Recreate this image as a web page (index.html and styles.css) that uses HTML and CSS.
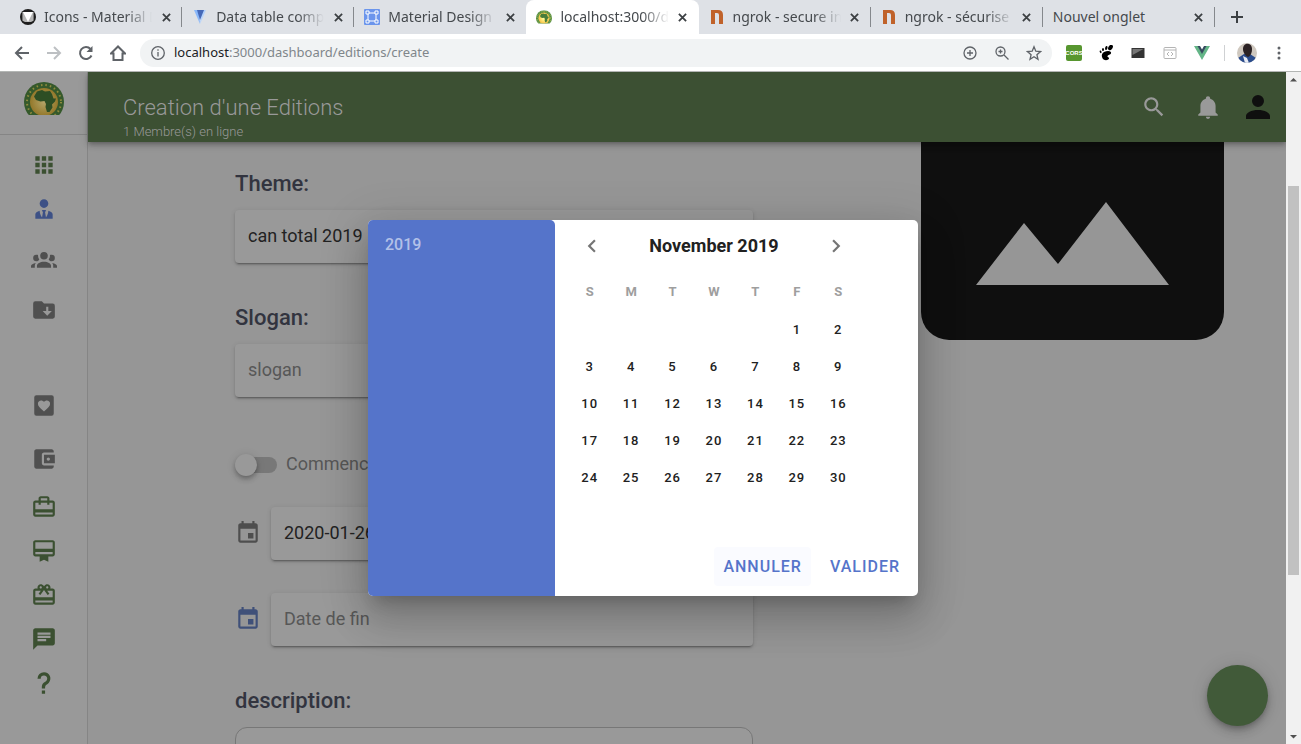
FILE: index.html
```html
<!DOCTYPE html>
<html lang="fr">
<head>
<meta charset="utf-8">
<title>Creation d'une Editions</title>
<link rel="stylesheet" href="styles.css">
</head>
<body>
<div class="tabstrip">
  <div class="tabs">
    <div class="tab">
      <svg class="favicon" viewBox="0 0 16 16"><circle cx="8" cy="8" r="8" fill="#1d1d1d"/><path d="M2 3h2v8L2 12zM14 3h-2v8l2 1z" fill="#777"/><path d="M3 3h10v9l-2 1H5l-2-1z" fill="#b5b5b5"/><path d="M3 3h10L8 13z" fill="#fff"/></svg>
      <span class="tab-title">Icons - Material D</span>
      <button class="close" aria-label="Fermer"><svg viewBox="0 0 10 10"><path d="M1 1l8 8M9 1L1 9"/></svg></button>
    </div>
    <div class="tab">
      <svg class="favicon" viewBox="0 0 16 16"><path d="M2 1h5l1 14z" fill="#8ab8fa"/><path d="M9 1h5L8 15z" fill="#b5d3fb"/><path d="M5 1h7L8 11z" fill="#4669b8"/></svg>
      <span class="tab-title">Data table comp</span>
      <button class="close" aria-label="Fermer"><svg viewBox="0 0 10 10"><path d="M1 1l8 8M9 1L1 9"/></svg></button>
    </div>
    <div class="tab before-active">
      <svg class="favicon" viewBox="0 0 16 16"><rect width="16" height="16" rx="1" fill="#6b95ec"/><path d="M4 4h8v8H4z" fill="none" stroke="#fff"/><path d="M2 2h3v3H2zM11 2h3v3h-3zM2 11h3v3H2zM11 11h3v3h-3z" fill="#6b95ec" stroke="#fff"/></svg>
      <span class="tab-title">Material Design</span>
      <button class="close" aria-label="Fermer"><svg viewBox="0 0 10 10"><path d="M1 1l8 8M9 1L1 9"/></svg></button>
    </div>
    <div class="tab active">
      <svg class="favicon bright" viewBox="0 0 40 34"><use href="#caf"/></svg>
      <span class="tab-title">localhost:3000/d</span>
      <button class="close" aria-label="Fermer"><svg viewBox="0 0 10 10"><path d="M1 1l8 8M9 1L1 9"/></svg></button>
    </div>
    <div class="tab">
      <svg class="favicon" viewBox="0 0 16 16"><path d="M2 1h7q5 0 5 5v9h-4V6q0-2-2-2H6v11H2z" fill="#c0622a"/></svg>
      <span class="tab-title">ngrok - secure in</span>
      <button class="close" aria-label="Fermer"><svg viewBox="0 0 10 10"><path d="M1 1l8 8M9 1L1 9"/></svg></button>
    </div>
    <div class="tab">
      <svg class="favicon" viewBox="0 0 16 16"><path d="M2 1h7q5 0 5 5v9h-4V6q0-2-2-2H6v11H2z" fill="#c0622a"/></svg>
      <span class="tab-title">ngrok - sécurise</span>
      <button class="close" aria-label="Fermer"><svg viewBox="0 0 10 10"><path d="M1 1l8 8M9 1L1 9"/></svg></button>
    </div>
    <div class="tab">
      <span class="tab-title">Nouvel onglet</span>
      <button class="close" aria-label="Fermer"><svg viewBox="0 0 10 10"><path d="M1 1l8 8M9 1L1 9"/></svg></button>
    </div>
  </div>
  <button class="new-tab" aria-label="Nouvel onglet"><svg viewBox="0 0 12 12"><path d="M6 0v12M0 6h12"/></svg></button>
</div>

<div class="toolbar">
  <div class="nav-buttons">
    <button aria-label="Retour"><svg viewBox="0 0 16 16"><path d="M15 8H2M8 2L2 8l6 6"/></svg></button>
    <button class="disabled" aria-label="Avancer"><svg viewBox="0 0 16 16"><path d="M1 8h13M8 2l6 6-6 6"/></svg></button>
    <button aria-label="Actualiser"><svg viewBox="0 0 16 16"><path d="M13.500 10.500A6 6 0 1 1 12.500 4"/><path d="M14.500 1v6h-6z" fill="#5f6368" stroke="none"/></svg></button>
    <button aria-label="Accueil"><svg viewBox="0 0 16 16"><path d="M1 8.500L8 1.500l7 7h-2.500V15h-9V8.500z"/></svg></button>
  </div>
  <div class="omnibox">
    <svg class="info" viewBox="0 0 16 16"><circle cx="8" cy="8" r="6.300"/><path d="M8 7v4.500M8 4.300v1.500"/></svg>
    <div class="url"><span class="host">localhost</span>:3000/dashboard/editions/create</div>
    <button aria-label="Ajouter"><svg viewBox="0 0 16 16"><circle cx="8" cy="8" r="6"/><path d="M8 5v6M5 8h6"/></svg></button>
    <button aria-label="Zoom"><svg viewBox="0 0 16 16"><circle cx="6.500" cy="6.500" r="4.500"/><path d="M10 10l4.500 4.500M6.500 4.500v4M4.500 6.500h4"/></svg></button>
    <button aria-label="Favori"><svg viewBox="0 0 16 16"><path d="M8 1.800l1.800 4.400 4.700.400-3.600 3.100 1.100 4.600L8 11.800l-4 2.500 1.100-4.600L1.500 6.600l4.700-.400z"/></svg></button>
  </div>
  <div class="extensions">
    <button class="cors">CORS</button>
    <button aria-label="GNOME"><svg viewBox="0 0 16 16"><path d="M6 7c4-2 8-1 7 1.500-.500 1.500-3 1-3.500 2.500s2 1 1.500 2.500C10 16 5 16 4 12c-.500-2 0-4 2-5z"/><ellipse cx="12.500" cy="2.500" rx="2" ry="3" transform="rotate(35 12.500 2.500)"/><ellipse cx="8.300" cy="3" rx="1.200" ry="2" transform="rotate(15 8.300 3)"/><ellipse cx="5" cy="4.500" rx="1" ry="1.600"/><ellipse cx="2.600" cy="6.800" rx=".9" ry="1.400" transform="rotate(-20 2.600 6.800)"/></svg></button>
    <button aria-label="Terminal"><svg viewBox="0 0 16 16"><path d="M1.500 3h13v10h-13z" fill="#333"/><path d="M2.500 4h11L2.500 10z" fill="#777"/></svg></button>
    <button aria-label="Code"><svg viewBox="0 0 16 16" fill="none" stroke="#b4b4b4"><rect x="2" y="2.500" width="12" height="11" rx="1"/><path d="M2 5h12M7 7L5 9l2 2M9 7l2 2-2 2"/></svg></button>
    <button aria-label="Vue"><svg viewBox="0 0 16 16"><path d="M0 1h4l4 7 4-7h4L8 15z" fill="#64b587"/><path d="M3.500 1H6l2 3.500L10 1h2.500L8 9z" fill="#35495e"/></svg></button>
  </div>
  <span class="divider"></span>
  <button class="avatar" aria-label="Profil"><svg viewBox="0 0 20 20"><defs><clipPath id="round"><circle cx="10" cy="10" r="10"/></clipPath></defs><g clip-path="url(#round)"><path d="M0 0h20v20H0z" fill="#cfc8bf"/><path d="M1 20v-5l6-4h6l6 4v5z" fill="#2b4c8c"/><path d="M6 13l4 2 2 5H8z" fill="#e8ecf4"/><path d="M6 6c0-7 9-7 9 0 0 3-1 7-4 8-3-1-5-5-5-8z" fill="#2b2224"/></g></svg></button>
  <button class="menu" aria-label="Menu"><svg viewBox="0 0 4 16"><circle cx="2" cy="3" r="1.500"/><circle cx="2" cy="8" r="1.500"/><circle cx="2" cy="13" r="1.500"/></svg></button>
</div>

<div class="viewport">
  <div class="app">
    <aside class="sidebar">
      <a class="logo" href="#" aria-label="Accueil">
        <svg viewBox="0 0 40 34">
          <defs><radialGradient id="gold"><stop offset="0" stop-color="#b3a468"/><stop offset="1" stop-color="#94782a"/></radialGradient>
          <clipPath id="cut"><path d="M0 0h40v33H0z"/></clipPath>
          <g id="caf"><g clip-path="url(#cut)"><circle cx="20" cy="20" r="20" fill="#35592b"/><circle cx="20" cy="20" r="17" fill="none" stroke="#8f8b3c" stroke-width="2" stroke-dasharray="1.500 3"/><circle cx="20" cy="20" r="14" fill="url(#gold)"/><path d="M13 9.500l5-1.500 3 1.500 5-.5 2 3 1.500 4.500h2.500l-1 3-3 3 .5 3-3 4.500h-2.500l-1.500-5 .5-3-1.500-3-4 .5-4.500-1.500-2-3.500z" fill="#2d4e24"/></g></g></defs>
          <use href="#caf"/>
        </svg>
      </a>
      <nav class="side-nav">
        <div class="group compact green">
          <a href="#" aria-label="Tableau de bord"><svg class="icon" viewBox="0 0 24 24"><path d="M16,20H20V16H16M16,14H20V10H16M10,8H14V4H10M16,8H20V4H16M10,14H14V10H10M4,14H8V10H4M4,20H8V16H4M10,20H14V16H10M4,8H8V4H4V8Z"/></svg></a>
          <a class="current" href="#" aria-label="Membres"><svg class="icon" viewBox="0 0 24 24"><path d="M12 3C14.210 3 16 4.790 16 7S14.210 11 12 11 8 9.210 8 7 9.790 3 12 3M16 13.540C16 14.600 15.720 17.070 13.810 19.830L13 15L13.940 13.120C13.320 13.050 12.670 13 12 13S10.680 13.050 10.060 13.120L11 15L10.190 19.830C8.280 17.070 8 14.600 8 13.540C5.610 14.240 4 15.500 4 17V21H20V17C20 15.500 18.400 14.240 16 13.540Z"/></svg></a>
        </div>
        <div class="group roomy">
          <a href="#" aria-label="Equipes"><svg class="icon" viewBox="0 0 24 24"><path d="M12,5.500A3.500,3.500 0 0,1 15.500,9A3.500,3.500 0 0,1 12,12.500A3.500,3.500 0 0,1 8.500,9A3.500,3.500 0 0,1 12,5.500M5,8C5.560,8 6.080,8.150 6.530,8.420C6.380,9.850 6.800,11.270 7.660,12.380C7.160,13.340 6.160,14 5,14A3,3 0 0,1 2,11A3,3 0 0,1 5,8M19,8A3,3 0 0,1 22,11A3,3 0 0,1 19,14C17.840,14 16.840,13.340 16.340,12.380C17.200,11.270 17.620,9.850 17.470,8.420C17.920,8.150 18.440,8 19,8M5.500,18.250C5.500,16.180 8.410,14.500 12,14.500C15.590,14.500 18.500,16.180 18.500,18.250V20H5.500V18.250M0,20V18.500C0,17.110 1.890,15.940 4.450,15.600C3.860,16.280 3.500,17.220 3.500,18.250V20H0M24,20H20.500V18.250C20.500,17.220 20.140,16.280 19.550,15.600C22.110,15.940 24,17.110 24,18.500V20Z"/></svg></a>
          <a href="#" aria-label="Dossiers"><svg class="icon" viewBox="0 0 24 24"><path d="M20,6A2,2 0 0,1 22,8V18A2,2 0 0,1 20,20H4A2,2 0 0,1 2,18V6A2,2 0 0,1 4,4H10L12,6H20M19.250,13H16V9H14V13H10.750L15,17.250"/></svg></a>
        </div>
        <div class="group roomy spaced">
          <a href="#" aria-label="Favoris"><svg class="icon" viewBox="0 0 24 24"><path fill-rule="evenodd" d="M5,2H19A2,2 0 0,1 21,4V19A2,2 0 0,1 19,21H5A2,2 0 0,1 3,19V4A2,2 0 0,1 5,2M12,17L12.720,16.340C15.800,13.600 17.600,12 17.600,9.900C17.600,8.200 16.300,7 14.700,7C13.600,7 12.600,7.500 12,8.300C11.400,7.500 10.400,7 9.300,7C7.700,7 6.400,8.200 6.400,9.900C6.400,12 8.200,13.600 11.280,16.340Z"/></svg></a>
          <a href="#" aria-label="Portefeuille"><svg class="icon" viewBox="0 0 24 24"><path d="M21 18v1c0 1.100-.9 2-2 2H5c-1.110 0-2-.9-2-2V5c0-1.100.89-2 2-2h14c1.100 0 2 .9 2 2v1h-9c-1.110 0-2 .9-2 2v8c0 1.100.89 2 2 2h9zm-9-2h10V8H12v8zm4-2.500c-.83 0-1.500-.67-1.500-1.500s.67-1.500 1.500-1.500 1.500.67 1.500 1.500-.67 1.500-1.500 1.500z"/></svg></a>
        </div>
        <div class="group compact green last">
          <a href="#" aria-label="Voyages"><svg class="icon" viewBox="0 0 24 24"><path d="M20 6h-3V4c0-1.110-.89-2-2-2H9c-1.110 0-2 .89-2 2v2H4c-1.110 0-2 .89-2 2v11c0 1.110.89 2 2 2h16c1.110 0 2-.89 2-2V8c0-1.110-.89-2-2-2zM9 4h6v2H9V4zm11 15H4v-2h16v2zm0-5H4V8h3v2h2V8h6v2h2V8h3v6z"/></svg></a>
          <a href="#" aria-label="Adhésions"><svg class="icon" viewBox="0 0 24 24"><path d="M20 2H4c-1.110 0-2 .89-2 2v11c0 1.110.89 2 2 2h4v5l4-2 4 2v-5h4c1.110 0 2-.89 2-2V4c0-1.110-.89-2-2-2zm0 13H4v-2h16v2zm0-5H4V4h16v6z"/></svg></a>
          <a href="#" aria-label="Cadeaux"><svg class="icon" viewBox="0 0 24 24"><path d="M20 6h-2.180c.11-.31.18-.65.18-1 0-1.660-1.340-3-3-3-1.050 0-1.960.54-2.500 1.350l-.5.67-.5-.68C10.960 2.540 10.050 2 9 2 7.340 2 6 3.340 6 5c0 .35.07.69.18 1H4c-1.110 0-1.990.89-1.990 2L2 19c0 1.110.89 2 2 2h16c1.110 0 2-.89 2-2V8c0-1.110-.89-2-2-2zm-5-2c.55 0 1 .45 1 1s-.45 1-1 1-1-.45-1-1 .45-1 1-1zM9 4c.55 0 1 .45 1 1s-.45 1-1 1-1-.45-1-1 .45-1 1-1zm11 15H4v-2h16v2zm0-5H4V8h5.080L7 10.830 8.620 12 11 8.760l1-1.360 1 1.360L15.380 12 17 10.830 14.920 8H20v6z"/></svg></a>
          <a href="#" aria-label="Messages"><svg class="icon" viewBox="0 0 24 24"><path d="M20 2H4c-1.100 0-1.990.9-1.990 2L2 22l4-4h14c1.100 0 2-.9 2-2V4c0-1.100-.9-2-2-2zM6 9h12v2H6V9zm8 5H6v-2h8v2zm4-6H6V6h12v2z"/></svg></a>
          <a href="#" aria-label="Aide"><svg class="icon" viewBox="0 0 24 24"><path d="M10,19H13V22H10V19M12,2C17.350,2.220 19.680,7.620 16.500,11.670C15.670,12.670 14.330,13.330 13.670,14.170C13,15 13,16 13,17H10C10,15.330 10,13.920 10.670,12.920C11.330,11.920 12.670,11.330 13.500,10.670C15.920,8.430 15.320,5.260 12,5A3,3 0 0,0 9,8H6A6,6 0 0,1 12,2Z"/></svg></a>
        </div>
      </nav>
    </aside>

    <div class="page">
      <header class="appbar">
        <div class="heading">
          <h1>Creation d'une Editions</h1>
          <p>1 Membre(s) en ligne</p>
        </div>
        <div class="actions">
          <button aria-label="Rechercher"><svg class="icon" viewBox="0 0 24 24"><path d="M15.500 14h-.79l-.28-.27C15.410 12.590 16 11.110 16 9.500 16 5.910 13.090 3 9.500 3S3 5.910 3 9.500 5.910 16 9.500 16c1.610 0 3.090-.59 4.230-1.570l.27.28v.79l5 4.990L20.490 19l-4.990-5zm-6 0C7.010 14 5 11.990 5 9.500S7.010 5 9.500 5 14 7.010 14 9.500 11.990 14 9.500 14z"/></svg></button>
          <button aria-label="Notifications"><svg class="icon" viewBox="0 0 24 24"><path d="M21,19V20H3V19L5,17V11C5,7.900 7.030,5.170 10,4.290C10,4.190 10,4.100 10,4A2,2 0 0,1 12,2A2,2 0 0,1 14,4C14,4.100 14,4.190 14,4.290C16.970,5.170 19,7.900 19,11V17L21,19M14,21A2,2 0 0,1 12,23A2,2 0 0,1 10,21"/></svg></button>
          <button class="account" aria-label="Compte"><svg viewBox="0 0 24 24"><path d="M12,4A4,4 0 0,1 16,8A4,4 0 0,1 12,12A4,4 0 0,1 8,8A4,4 0 0,1 12,4M12,14C16.420,14 20,15.790 20,18V20H4V18C4,15.790 7.580,14 12,14Z"/></svg></button>
        </div>
      </header>

      <main class="content">
        <form class="form">
          <div class="field">
            <label for="theme">Theme:</label>
            <input class="box" id="theme" type="text" value="can total 2019">
          </div>
          <div class="field">
            <label for="slogan">Slogan:</label>
            <input class="box" id="slogan" type="text" placeholder="slogan">
          </div>
          <div class="switch-row">
            <input class="switch" id="started" type="checkbox">
            <label for="started">Commencer</label>
          </div>
          <div class="date-row">
            <svg class="icon" viewBox="0 0 24 24"><path d="M17 12h-5v5h5v-5zM16 1v2H8V1H6v2H5c-1.110 0-1.990.9-1.990 2L3 19c0 1.100.89 2 2 2h14c1.100 0 2-.9 2-2V5c0-1.100-.9-2-2-2h-1V1h-2zm3 18H5V8h14v11z"/></svg>
            <input class="box" type="text" value="2020-01-26" aria-label="Date de debut">
          </div>
          <div class="date-row focused">
            <svg class="icon" viewBox="0 0 24 24"><path d="M17 12h-5v5h5v-5zM16 1v2H8V1H6v2H5c-1.110 0-1.990.9-1.990 2L3 19c0 1.100.89 2 2 2h14c1.100 0 2-.9 2-2V5c0-1.100-.9-2-2-2h-1V1h-2zm3 18H5V8h14v11z"/></svg>
            <input class="box" type="text" placeholder="Date de fin" aria-label="Date de fin">
          </div>
          <div class="field">
            <label for="description">description:</label>
            <textarea class="area" id="description"></textarea>
          </div>
        </form>
        <div class="picture">
          <svg viewBox="0 0 303 198" role="img" aria-label="Image"><path d="M0 0h303v170a28 28 0 0 1-28 28H28a28 28 0 0 1-28-28z" fill="#0f0f0f"/><path d="M55 143L103 81l34 41 48-62 63 83z" fill="#969696"/></svg>
        </div>
      </main>
    </div>
    <button class="fab" aria-label="Ajouter"></button>

    <div class="overlay">
      <div class="picker" role="dialog" aria-label="Choisir une date">
        <div class="picker-title"><button>2019</button></div>
        <div class="picker-body">
          <div class="month-bar">
            <button aria-label="Mois précédent"><svg class="icon" viewBox="0 0 24 24"><path d="M15.410,16.580L10.830,12L15.410,7.410L14,6L8,12L14,18L15.410,16.580Z"/></svg></button>
            <button class="month">November 2019</button>
            <button aria-label="Mois suivant"><svg class="icon" viewBox="0 0 24 24"><path d="M8.590,16.580L13.170,12L8.590,7.410L10,6L16,12L10,18L8.590,16.580Z"/></svg></button>
          </div>
          <table class="days">
            <thead><tr><th>S</th><th>M</th><th>T</th><th>W</th><th>T</th><th>F</th><th>S</th></tr></thead>
            <tbody>
              <tr><td></td><td></td><td></td><td></td><td></td><td><button>1</button></td><td><button>2</button></td></tr>
              <tr><td><button>3</button></td><td><button>4</button></td><td><button>5</button></td><td><button>6</button></td><td><button>7</button></td><td><button>8</button></td><td><button>9</button></td></tr>
              <tr><td><button>10</button></td><td><button>11</button></td><td><button>12</button></td><td><button>13</button></td><td><button>14</button></td><td><button>15</button></td><td><button>16</button></td></tr>
              <tr><td><button>17</button></td><td><button>18</button></td><td><button>19</button></td><td><button>20</button></td><td><button>21</button></td><td><button>22</button></td><td><button>23</button></td></tr>
              <tr><td><button>24</button></td><td><button>25</button></td><td><button>26</button></td><td><button>27</button></td><td><button>28</button></td><td><button>29</button></td><td><button>30</button></td></tr>
            </tbody>
          </table>
          <div class="picker-actions">
            <button class="hovered">ANNULER</button>
            <button>VALIDER</button>
          </div>
        </div>
      </div>
    </div>
  </div>
  <div class="scrollbar" aria-hidden="true">
    <svg viewBox="0 0 15 15"><path d="M4 9.500L7.500 6 11 9.500z"/></svg>
    <div class="track"><div class="thumb"></div></div>
    <svg viewBox="0 0 15 15"><path d="M4 6l3.500 3.500L11 6z"/></svg>
  </div>
</div>
</body>
</html>
```

FILE: styles.css
```css
* { box-sizing: border-box; }

body {
  margin: 0;
  height: 100vh;
  display: flex;
  flex-direction: column;
  overflow: hidden;
  font-family: Roboto, sans-serif;
}

button {
  margin: 0;
  padding: 0;
  border: 0;
  background: none;
  color: inherit;
  font: inherit;
  display: flex;
  align-items: center;
  justify-content: center;
}

svg { display: block; flex: none; }
.icon { width: 26px; height: 26px; fill: currentColor; }

/* browser tabs */
.tabstrip {
  flex: none;
  height: 34px;
  display: flex;
  padding-left: 10px;
  background: #dee1e6;
  font: 14px/20px "Noto Sans", sans-serif;
  color: #45494d;
}
.tabs { flex: 1; display: flex; min-width: 0; }
.tab {
  flex: 1 1 0;
  min-width: 0;
  display: flex;
  align-items: center;
  gap: 8px;
  padding: 0 10px;
  background: linear-gradient(#85888c, #85888c) right center / 1px 20px no-repeat;
}
.tab.before-active { background: none; }
.tab.active { background: #fff; border-radius: 8px 8px 0 0; }
.favicon { width: 16px; height: 16px; }
.bright { filter: brightness(1.6); }
.tab-title {
  flex: 1;
  overflow: hidden;
  white-space: nowrap;
  -webkit-mask-image: linear-gradient(to right, #000 75%, transparent);
  mask-image: linear-gradient(to right, #000 75%, transparent);
}
.tab:last-child .tab-title { -webkit-mask-image: none; mask-image: none; }
.close { width: 12px; height: 16px; }
.close svg { width: 9px; height: 9px; stroke: #3c4043; stroke-width: 2; }
.new-tab { width: 86px; padding-right: 42px; }
.new-tab svg { width: 12px; height: 12px; stroke: #3c4043; stroke-width: 2; }

/* browser toolbar */
.toolbar {
  flex: none;
  height: 38px;
  display: flex;
  align-items: center;
  padding: 0 14px;
  background: #fff;
  border-bottom: 1px solid #b3b6b4;
}
.nav-buttons { display: flex; gap: 16px; margin-right: 14px; }
.nav-buttons svg { width: 16px; height: 16px; fill: none; stroke: #5f6368; stroke-width: 2; }
.nav-buttons .disabled svg { stroke: #bdc0c3; }
.omnibox {
  flex: 1;
  height: 28px;
  display: flex;
  align-items: center;
  gap: 16px;
  padding: 0 10px;
  border-radius: 14px;
  background: #f1f3f4;
}
.omnibox svg { width: 16px; height: 16px; fill: none; stroke: #5f6368; stroke-width: 1.300; }
.url { flex: 1; margin-left: -8px; padding-bottom: 2px; font: 13px/20px "Noto Sans", sans-serif; color: #80868b; white-space: nowrap; }
.host { color: #202124; }
.extensions { display: flex; gap: 16px; margin-left: 14px; }
.extensions svg { width: 16px; height: 16px; }
.cors { width: 16px; height: 16px; border-radius: 2px; background: #57962f; color: #fff; font: 700 6px/16px "Liberation Sans", sans-serif; }
.divider { width: 1px; height: 16px; margin: 0 12px 0 14px; background: #cfd1d3; }
.avatar svg { width: 20px; height: 20px; }
.menu { width: 16px; margin-left: 14px; }
.menu svg { width: 4px; height: 16px; fill: #5f6368; }

/* application frame */
.viewport { flex: 1; min-height: 0; display: flex; }
.app { flex: 1; min-width: 0; position: relative; display: flex; overflow: hidden; background: #969696; }

.sidebar { flex: none; width: 88px; border-right: 1px solid #858585; background: #999; color: #505050; }
.logo { height: 63px; padding-top: 10px; border-bottom: 1px solid #858585; }
.logo, .side-nav a { display: flex; justify-content: center; color: inherit; }
.logo svg { width: 40px; height: 34px; }
.side-nav { padding-top: 8px; }
.side-nav a { align-items: center; height: 50px; }
.group { display: grid; }
.side-nav .compact a { height: 44px; }
.roomy { gap: 1px; padding-top: 3px; }
.spaced { gap: 3px; padding-top: 46px; }
.last { padding-top: 1px; }
.green { color: #3b5031; }
.side-nav .current { color: #3d5186; }

.page { flex: 1; min-width: 0; display: flex; flex-direction: column; }
.appbar {
  flex: none;
  z-index: 1;
  height: 70px;
  display: flex;
  align-items: center;
  justify-content: space-between;
  padding: 0 10px 0 35px;
  background: #3c5033;
  color: #999;
  box-shadow: 0 2px 4px -1px rgba(0,0,0,.2), 0 4px 5px rgba(0,0,0,.14), 0 1px 10px rgba(0,0,0,.12);
}
.heading { padding-top: 18px; }
.heading h1 { margin: 0; font-size: 22px; line-height: 32px; font-weight: 300; }
.heading p { margin: 0; font-size: 13px; line-height: 16px; font-weight: 300; }
.actions { display: flex; align-items: center; gap: 28px; }
.account { color: #0f0f0f; margin-left: -9px; }
.account svg { width: 36px; height: 36px; fill: currentColor; }

.content {
  flex: 1;
  min-height: 0;
  overflow: hidden;
  display: grid;
  grid-template-columns: 518fr 303fr;
  gap: 168px;
  padding: 0 62px 0 147px;
}
.form { display: flex; flex-direction: column; gap: 40px; padding-top: 28px; }
.field { display: grid; gap: 12px; margin-bottom: 1px; }
.field label { font-size: 22px; line-height: 28px; font-weight: 500; color: #32343f; }
.box {
  width: 100%;
  min-width: 0;
  height: 53px;
  padding: 0 13px 2px;
  border: 0;
  border-radius: 4px;
  background: #999;
  color: #222;
  font: 18px/24px Roboto, sans-serif;
  box-shadow: 0 3px 1px -2px rgba(0,0,0,.2), 0 2px 2px rgba(0,0,0,.14), 0 1px 5px rgba(0,0,0,.12);
}
.box::placeholder { color: #575757; opacity: 1; }
.switch-row { display: flex; align-items: center; gap: 9px; height: 32px; margin: 11px 0 -14px; color: #575757; font-size: 18px; line-height: 24px; }
.switch-row label { padding-bottom: 2px; }
.switch {
  appearance: none;
  position: relative;
  width: 42px;
  height: 16px;
  margin: 0;
  border-radius: 8px;
  background: linear-gradient(#787878, #787878) right / 36px 16px no-repeat;
}
.switch::before {
  content: "";
  position: absolute;
  left: 0;
  top: -3px;
  width: 22px;
  height: 22px;
  border-radius: 50%;
  background: #999;
  box-shadow: 0 2px 4px -1px rgba(0,0,0,.2), 0 4px 5px rgba(0,0,0,.14), 0 1px 10px rgba(0,0,0,.12);
}
.date-row { display: flex; align-items: center; gap: 10px; color: #4e4e4e; }
.date-row .icon { margin-top: -2px; }
.date-row.focused { margin-top: -7px; margin-bottom: 1px; color: #3f5079; }
.area { width: 100%; height: 140px; border: 1px solid #777; border-radius: 12px; background: #999; resize: none; }
.picture svg { width: 100%; height: auto; }

.fab {
  position: absolute;
  right: 18px;
  bottom: 18px;
  width: 61px;
  height: 61px;
  border-radius: 50%;
  background: #415a39;
  box-shadow: 0 3px 5px -1px rgba(0,0,0,.2), 0 6px 10px rgba(0,0,0,.14), 0 1px 18px rgba(0,0,0,.12);
}

/* date picker */
.overlay { position: absolute; inset: 0; z-index: 2; display: grid; place-items: center; }
.picker {
  width: 550px;
  min-height: 376px;
  display: flex;
  border-radius: 5px;
  overflow: hidden;
  background: #fff;
  box-shadow: 0 11px 15px -7px rgba(0,0,0,.2), 0 24px 38px 3px rgba(0,0,0,.14), 0 9px 46px 8px rgba(0,0,0,.12);
}
.picker-title { width: 187px; padding: 16px 17px; border-radius: 0 5px 0 0; background: #5574ca; color: #b3c1e8; font-size: 16px; line-height: 18px; font-weight: 500; }
.picker-body { flex: 1; display: flex; flex-direction: column; }
.month-bar { display: flex; align-items: center; justify-content: space-between; width: 270px; height: 51px; margin-left: 24px; color: #757575; }
.month { font-size: 18px; font-weight: 700; color: #212121; }
.days { width: 290px; margin-left: 14px; border-collapse: collapse; table-layout: fixed; font-size: 13px; color: #212121; }
.days th, .days td { height: 37px; padding: 0; text-align: center; }
.days th { height: 41px; font-weight: 700; color: #9e9e9e; }
.days td { padding-bottom: 2px; }
.days button { width: 100%; font-weight: 500; letter-spacing: 1px; }
.picker-actions { display: flex; justify-content: flex-end; gap: 10px; margin-top: auto; padding: 0 9px 10px; color: #5574ca; font-size: 16px; font-weight: 500; }
.picker-actions button { height: 39px; padding: 0 9px; border-radius: 4px; letter-spacing: 1px; }
.picker-actions .hovered { background: #fafbff; }

/* page scrollbar */
.scrollbar { flex: none; width: 15px; display: flex; flex-direction: column; background: #f1f1f1; }
.scrollbar svg { width: 15px; height: 15px; fill: #505050; }
.track { flex: 1; display: grid; grid-template-rows: 99fr 389fr 154fr; padding: 0 2px; }
.thumb { grid-row: 2; background: #c1c1c1; }
```
